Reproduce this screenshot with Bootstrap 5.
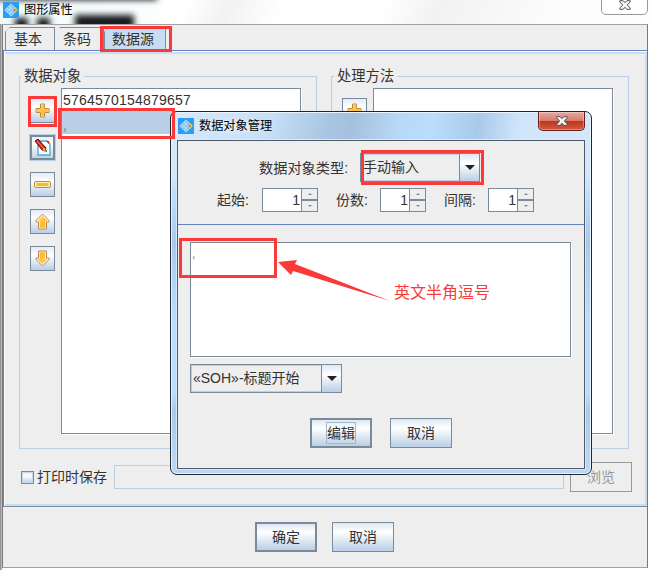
<!DOCTYPE html>
<html lang="zh-CN">
<head>
<meta charset="utf-8">
<meta name="viewport" content="width=device-width, initial-scale=1">
<title>图形属性</title>
<link href="https://cdn.jsdelivr.net/npm/bootstrap@5.3.0/dist/css/bootstrap.min.css" rel="stylesheet">
<style>
html,body{height:570px;overflow:hidden}
body{width:650px;font-family:"Liberation Sans","Noto Sans CJK SC",sans-serif;font-size:14px;line-height:20px;color:#333;background:#fff;white-space:nowrap}
.desk{width:650px;height:570px;overflow:hidden;background:linear-gradient(90deg,#7b7b80 0,#fff 3px)}
.blob{position:absolute;background:#15171a;filter:blur(3px)}
.main-title{height:24px;padding-left:3px;background:linear-gradient(115deg,#eefafa 0,#fff 170px,#f2f2f2 210px,#fff 260px,#fff 350px,#f2f2f2 400px,#fdfdfd 520px)}
.cap{font-size:12.2px;color:#000;line-height:16px}
.main-frame{margin-left:2px;width:646px;height:544px;background:#eee;border:1px solid #777;border-top-color:#a0a0a0;border-bottom-color:#a0a0a0}
.tabs{height:25px;padding:2px 0 0 2px}
.jtab{height:23px;border:1px solid #7a8a99;border-bottom:0;background:#eee;text-align:center;line-height:22px;padding-right:4px;clip-path:polygon(5px 0,100% 0,100% 100%,0 100%,0 5px);position:relative}
.jtab::before{content:"";position:absolute;left:-3px;top:1px;width:8px;height:1px;background:#7a8a99;transform:rotate(-45deg)}
.jtab.on{background:#c8ddf2}
.pane{height:457px;border:1px solid #6382bf;border-right:0;border-bottom-color:#7a8a99;padding:1px 0 0 1px;background:#fff}
.pane-in{height:454px;border:solid #c8ddf2;border-width:2px 2px 2px 0;background:#eee;padding:22px 16px 0 14px}
.group{height:373px;border:1px solid #b8cfe5;padding:12px 15px 0 10px;position:relative}
.group>.leg{position:absolute;left:1px;top:-11px;padding:0 3px;background:#eee;font-size:14.3px}
.lst{background:#fff;border:1px solid #7a8a99;box-shadow:1px 1px #fff;height:346px;margin-top:-1px}
.item{height:22px;padding-left:1px;line-height:23px}
.item.sel{background:#b8cfe5;height:23px;padding-top:3px;color:#777}
.num{letter-spacing:.21px}
.tool{width:25px;height:25px;border:1px solid #7a8a99;background:linear-gradient(#e3ebf5,#fff 35%,#b8cfe5);display:flex;align-items:center;justify-content:center}
.tool.foc{box-shadow:inset 0 0 0 1px #7a8a99;outline:1px solid #b8cfe5}
.tools{gap:12px;padding-top:9px}
.jbtn{width:62px;height:30px;border:1px solid #7a8a99;border-radius:0;padding:0;background:linear-gradient(#dde8f3,#fff 32%,#b8cfe5);color:#333;font-size:14px;line-height:28px;text-align:center}
.jbtn.def{border-width:2px;line-height:26px}
.jbtn.off{background:#eee;border-color:#999;color:#999}
.focus-box{display:inline-block;height:22px;line-height:20px;border:1px solid #a3b8cc;vertical-align:middle;margin-top:-3px}
.check{width:13px;height:13px;border:1px solid #7a8a99;box-shadow:inset 0 0 0 1px #c8d8e8;background:linear-gradient(#e3ebf5,#fff 35%,#b8cfe5)}
.path-box{height:24px;width:450px;border:1px solid #b8cfe5}
.closer{position:absolute;display:flex;align-items:center;justify-content:center;border-radius:0 0 5px 5px}
.dlg{position:absolute;left:170px;top:111px;width:422px;height:364px;border:1px solid #20262e;border-radius:7px;padding:0 6px 6px;background:linear-gradient(180deg,#b9dcff00 60px,#b9dcff 85px,#a9c9ea 130px,#b9dcff 210px,#b9dcff 280px,#a9c9ea 300px,#b9d7f4 350px),linear-gradient(100deg,#d8e9fa 0,#c7dff7 100px,#a9c6e2 155px,#a4c0dc 180px,#b8d8f7 225px,#bcdcfb 260px,#a9c9ea 305px,#d0e5fa 345px,#d7e9fb 100%);box-shadow:inset 0 0 0 1px #e9f6ff}
.dlg-title{height:28px;padding:0 0 1px 1px}
.glow{padding:0 4px 0 5px;background:radial-gradient(ellipse,#ffffff90,#fff0 75%)}
.dlg-body{height:329px;background:#eee;border:1px solid #505a66;box-shadow:0 0 0 1px #d5eaff}
.upper{height:84px;border-bottom:1px solid #6382bf;padding-top:12px}
.combo{height:29px;border:1px solid #7a8a99;box-shadow:inset 0 0 0 1px #b8cfe5}
.combo .txt{padding-left:2px;flex:1;line-height:26px}
.arrow{width:20px;border-left:1px solid #7a8a99;background:linear-gradient(#dde8f3,#fff 35%,#b8cfe5);display:flex;align-items:center;justify-content:center}
.arrow::after{content:"";border:5px solid transparent;border-top-color:#222;border-bottom:0}
.spin{height:24px;border:1px solid #7a8a99;background:#fff}
.spin .val{flex:1;text-align:right;padding-right:1px;font-size:14px;line-height:23px;border-bottom:1px solid #fff}
.ud{width:16px;border-left:1px solid #7a8a99;background:#eee}
.ud i{flex:1;display:flex;align-items:center;justify-content:center}
.ud i+i{border-top:2px solid #7a8a99}
.ud i::after{content:"";border:2px solid transparent;border-bottom-color:#7a8a99;border-top:0}
.ud i+i::after{border:2px solid transparent;border-top-color:#7a8a99;border-bottom:0}
.area{width:381px;height:115px;background:#fff;border:1px solid #7a8a99;box-shadow:1px 1px #fff;padding-left:1px;line-height:23px;font-size:12px;color:#777}
.hl{position:absolute;border:3px solid #fb3a38}
.overlay-art{position:absolute;left:0;top:0}
.note{position:absolute;left:394px;top:282px;color:#fb3a38;font-size:16px;line-height:22px}
</style>
<script src="https://cdn.jsdelivr.net/npm/bootstrap@5.3.0/dist/js/bootstrap.bundle.min.js"></script>
</head>
<body class="m-0">
<svg width="0" height="0" class="position-absolute">
 <defs>
  <linearGradient id="gold" x1="0" y1="0" x2="1" y2="1"><stop offset="0" stop-color="#ffe07a"/><stop offset=".5" stop-color="#ffc03c"/><stop offset="1" stop-color="#ffae20"/></linearGradient>
  <symbol id="logo" viewBox="0 0 16 16"><rect width="16" height="16" fill="#2b9df4"/><g fill="#6fc0f8" stroke="#e2f4ff" stroke-width=".7"><path d="m8 1.8 1.8 1.8L8 5.4 6.2 3.6zM5.8 4l1.8 1.8-1.8 1.8L4 5.800zM3.600 6.200l1.800 1.800-1.800 1.800L1.800 8zM8 6.200 9.800 8 8 9.800 6.200 8zM5.800 8.400l1.800 1.800L5.800 12 4 10.200zM10.200 4 12 5.800l-1.800 1.800-1.800-1.800zM8 10.600l1.800 1.800L8 14.200l-1.800-1.800zM10.200 8.400l1.800 1.800-1.800 1.800-1.800-1.800z"/></g><path d="m11.6 5.600 2.200 2.400-2.200 2.200" fill="none" stroke="#f2c230" stroke-width="1.600"/><circle cx="11.200" cy="7.900" r="1" fill="#e5704c"/></symbol>
  <symbol id="plus" viewBox="0 0 15 15"><path d="M5.500 1h4v4.500H14v4H9.500V14h-4V9.500H1v-4h4.500z" fill="#fff3ce" stroke="#c18a38"/><path d="M6.500 2.500h2v4h4v2h-4v4h-2v-4h-4v-2h4z" fill="url(#gold)" stroke="#ffc649"/></symbol>
  <symbol id="up" viewBox="0 0 15 17"><path d="M7.5 1 14 7.5V9h-2.5v7h-8V9H1V7.5z" fill="#fff3ce" stroke="#b98c58"/><path d="m7.5 3 5 5h-2.2v6.8H4.8V8H2.5z" fill="url(#gold)"/></symbol>
  <symbol id="xmark" viewBox="0 0 12 10"><path d="M.7.7h3.5L6 2.7 7.8.7h3.5v1.1L8.4 5l2.9 3.2v1.1H7.8L6 7.3l-1.8 2H.7V8.2L3.6 5 .7 1.8z" fill="#f4f4f6" stroke="#50505e"/></symbol>
 </defs>
</svg>
<div class="desk position-relative">
 <header class="main-title d-flex align-items-center position-relative overflow-hidden">
  <span class="blob" style="left:-3px;top:-9px;width:160px;height:9px"></span>
  <span class="blob" style="left:15px;top:18px;width:13px;height:12px"></span>
  <span class="blob" style="left:37px;top:18px;width:13px;height:12px"></span>
  <span class="blob" style="left:75px;top:15px;width:59px;height:14px"></span>
  <svg class="position-relative" width="16" height="16" style="margin-top:-4px"><use href="#logo"/></svg>
  <span class="cap position-relative ms-1" style="margin-top:-4px;padding-left:1px">图形属性</span>
 </header>
 <span class="closer" style="left:601px;top:-5px;width:47px;height:20px;border:1px solid #999;background:#fff"><svg width="12" height="10"><use href="#xmark"/></svg></span>
 <main class="main-frame">
  <nav class="tabs d-flex">
   <div class="jtab" style="width:50px">基本</div>
   <div class="jtab" style="width:49px;border-left:0">条码</div>
   <div class="jtab on" style="width:62px">数据源</div>
  </nav>
  <section class="pane">
   <div class="pane-in">
    <div class="d-flex justify-content-between">
     <div class="group d-flex" style="width:298px"><span class="leg">数据对象</span>
      <div class="tools d-flex flex-column">
       <div class="tool"><svg width="15" height="15"><use href="#plus"/></svg></div>
       <div class="tool foc"><svg width="17" height="18" viewBox="0 0 17 18"><path d="M4 2h9l3 3v11H4z" fill="#fff" stroke="#46a9d3" stroke-width="1.3"/><path d="M7 8h7M7 11h7M7 13h6" stroke="#cfe6f2"/><path d="m12 2 3 3V2z" fill="#e11"/><path d="m1 2 3-2 8 9-1 3-3-1z" fill="#df2113" stroke="#701008"/><path d="m3 2 7 8" stroke="#ff8a54"/><path d="m8 11 3-2 1.5 4z" fill="#e8b36b"/><path d="m11 11.8 1.8 1.5-.5-2.3z" fill="#000"/></svg></div>
       <div class="tool"><svg width="17" height="7"><rect x=".5" y=".5" width="16" height="6" rx="1.5" fill="#fff1be" stroke="#c18a38"/><rect x="2.5" y="2" width="12" height="3" fill="#ffb52d"/></svg></div>
       <div class="tool"><svg width="15" height="17"><use href="#up"/></svg></div>
       <div class="tool"><svg width="15" height="17"><use href="#up" transform="rotate(180 7.5 8.5)"/></svg></div>
      </div>
      <div class="lst flex-grow-1" style="margin-left:6px"><div class="item num">5764570154879657</div><div class="item sel">,</div></div>
     </div>
     <div class="group d-flex" style="width:298px"><span class="leg" style="left:2px">处理方法</span>
      <div class="tools d-flex flex-column"><div class="tool"><svg width="15" height="15"><use href="#plus"/></svg></div></div>
      <div class="lst flex-grow-1" style="margin-left:6px"></div>
     </div>
    </div>
    <div class="d-flex align-items-center" style="margin:13px -3px 0 2px;height:30px">
     <span class="check"></span><label style="width:77px;margin-left:3px">打印时保存</label><span class="path-box"></span><button class="jbtn off ms-auto">浏览</button>
    </div>
   </div>
  </section>
  <footer class="d-flex" style="padding:15px 0 0 252px;gap:15px"><button class="jbtn def">确定</button><button class="jbtn">取消</button></footer>
 </main>

 <section class="dlg">
  <header class="dlg-title d-flex align-items-center"><svg width="16" height="16"><use href="#logo"/></svg><span class="cap glow">数据对象管理</span></header>
  <span class="closer" style="left:367px;top:0;width:47px;height:19px;border:1px solid #6b1d19;border-top:0;background:linear-gradient(#e7a99f,#d77b6c 48%,#bd3421 50%,#d35a3e);box-shadow:inset 0 0 0 1px #ffffff55"><svg width="12" height="10"><use href="#xmark"/></svg></span>
  <div class="dlg-body">
   <div class="upper">
    <div class="d-flex align-items-center" style="padding-left:81px"><span style="width:101px;font-size:14.2px">数据对象类型:</span><div class="combo d-flex" style="width:120px"><span class="txt">手动输入</span><span class="arrow"></span></div></div>
    <div class="d-flex align-items-center" style="padding-left:39px;margin-top:6px">
     <span style="width:45px">起始:</span><div class="spin d-flex" style="width:56px"><span class="val">1</span><span class="ud d-flex flex-column"><i></i><i></i></span></div>
     <span style="width:44px;margin-left:18px">份数:</span><div class="spin d-flex" style="width:46px"><span class="val">1</span><span class="ud d-flex flex-column"><i></i><i></i></span></div>
     <span style="width:44px;margin-left:18px">间隔:</span><div class="spin d-flex" style="width:46px"><span class="val">1</span><span class="ud d-flex flex-column"><i></i><i></i></span></div>
    </div>
   </div>
   <div style="padding:17px 0 0 12px">
    <div class="area">,</div>
    <div class="combo d-flex" style="width:152px;margin-top:7px"><span class="txt">«SOH»-标题开始</span><span class="arrow"></span></div>
   </div>
   <div class="d-flex" style="padding:25px 0 0 132px;gap:18px"><button class="jbtn def"><span class="focus-box">编辑</span></button><button class="jbtn">取消</button></div>
  </div>
 </section>

 <span class="hl" style="left:100px;top:26px;width:72px;height:26px"></span>
 <span class="hl" style="left:28px;top:96px;width:29px;height:31px"></span>
 <span class="hl" style="left:58px;top:108px;width:117px;height:31px"></span>
 <span class="hl" style="left:361px;top:150px;width:123px;height:35px"></span>
 <span class="hl" style="left:179px;top:238px;width:98px;height:40px"></span>
 <svg class="overlay-art" width="650" height="570" style="pointer-events:none"><path d="M278 262 297 260 295 264 390 301 293 271 291 275z" fill="#fb3a38"/></svg>
 <span class="note">英文半角逗号</span>
</div>
</body>
</html>
